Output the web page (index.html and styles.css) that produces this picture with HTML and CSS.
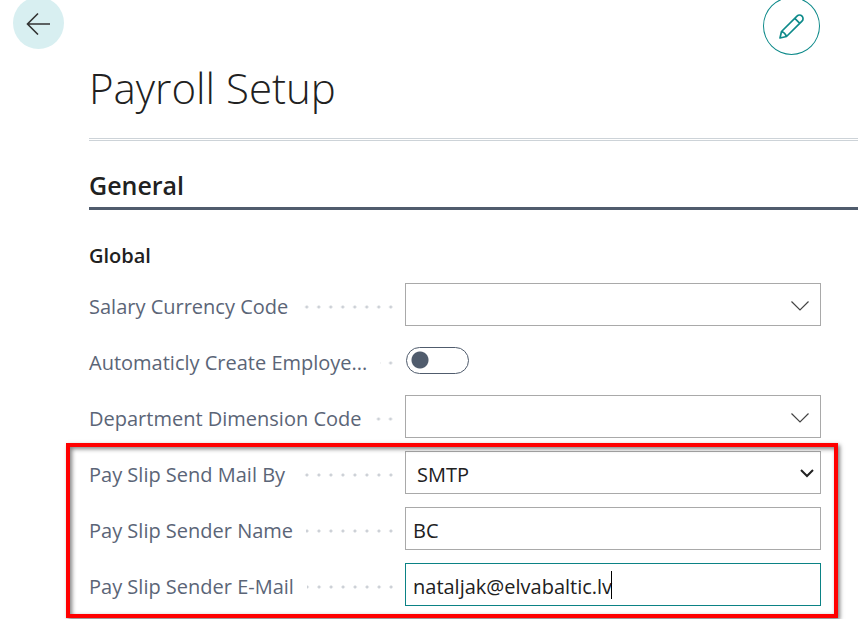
FILE: index.html
```html
<!DOCTYPE html>
<html lang="en">
<head>
<meta charset="utf-8">
<title>Payroll Setup</title>
<link rel="stylesheet" href="styles.css">
</head>
<body>
<header class="topbar">
  <button class="back" type="button" aria-label="Back">
    <svg width="26" height="24" viewBox="0 0 26 24"><path d="M24 13H1.500M12 2.500L1.500 13 12 23.500" fill="none" stroke="#333" stroke-width="1.600"/></svg>
  </button>
  <button class="edit" type="button" aria-label="Edit">
    <svg width="26" height="26" viewBox="0 0 26 26"><g fill="none" stroke="#0e8a8a" stroke-width="1.700" stroke-linejoin="round"><path d="M1 25l1.500-6.500L18 3.200a3.500 3.500 0 0 1 5 5L7.500 23.500zM15.800 5.400l5 5M2.500 18.500q3.500 1 5 5"/></g></svg>
  </button>
</header>
<main class="page">
  <h1 class="title">Payroll Setup</h1>
  <h2 class="section">General</h2>
  <h3 class="group">Global</h3>
  <form class="fields">
    <div class="row">
      <div class="caption"><label for="currency">Salary Currency Code</label><span class="dots"></span></div>
      <div class="field">
        <input class="box" id="currency" type="text">
        <svg class="chevron" width="18" height="10" viewBox="0 0 18 10"><path d="M.5.5L9 9 17.500.5" fill="none" stroke="#444" stroke-width="1.200"/></svg>
      </div>
    </div>
    <div class="row">
      <div class="caption"><label for="auto">Automaticly Create Employe...</label><span class="dots"></span></div>
      <div class="field"><input class="toggle" id="auto" type="checkbox"></div>
    </div>
    <div class="row">
      <div class="caption"><label for="department">Department Dimension Code</label><span class="dots"></span></div>
      <div class="field">
        <input class="box" id="department" type="text">
        <svg class="chevron" width="18" height="10" viewBox="0 0 18 10"><path d="M.5.5L9 9 17.500.5" fill="none" stroke="#444" stroke-width="1.200"/></svg>
      </div>
    </div>
    <div class="marked">
      <div class="row">
        <div class="caption"><label for="sendby">Pay Slip Send Mail By</label><span class="dots"></span></div>
        <div class="field">
          <select class="box select" id="sendby"><option>SMTP</option></select>
          <svg class="chevron chevron-select" width="14" height="9" viewBox="0 0 14 9"><path d="M1 1l6 6 6-6" fill="none" stroke="#222" stroke-width="2"/></svg>
        </div>
      </div>
      <div class="row">
        <div class="caption"><label for="sender">Pay Slip Sender Name</label><span class="dots"></span></div>
        <div class="field"><input class="box" id="sender" type="text" value="BC"></div>
      </div>
      <div class="row">
        <div class="caption"><label for="email">Pay Slip Sender E-Mail</label><span class="dots"></span></div>
        <div class="field"><input class="box active" id="email" type="text" value="nataljak@elvabaltic.lv"><span class="caret"></span></div>
      </div>
    </div>
  </form>
</main>
</body>
</html>
```
FILE: styles.css
```css
* { box-sizing: border-box; }
body {
  margin: 0;
  overflow: hidden;
  background: #fff;
  color: #212121;
  font-family: "Segoe UI", "Open Sans", "Noto Sans", sans-serif;
  font-size: 20px;
}
.topbar {
  display: flex;
  justify-content: space-between;
  margin-top: -3px;
  padding: 0 38px 0 13px;
}
button {
  display: flex;
  align-items: center;
  justify-content: center;
  padding: 0;
  border: 0;
  border-radius: 50%;
}
.back { width: 51px; height: 52px; background: #d8eff1; }
.edit { width: 57px; height: 58px; background: #fff; border: 1px solid #0e8a8a; }
.page { padding-left: 89px; }
.title {
  margin: 0;
  height: 86px;
  border-bottom: 3px double #cdd3d8;
  line-height: 66px;
  font-size: 42px;
  font-weight: 300;
}
.section {
  margin: 24px 0 0;
  padding-bottom: 2px;
  border-bottom: 3px solid #505c6d;
  line-height: 40px;
  font-size: 25px;
  font-weight: 600;
}
.group {
  margin: 30px 0 11px;
  line-height: 32px;
  font-size: 20px;
  font-weight: 600;
}
.row {
  display: grid;
  grid-template-columns: 304px 1fr;
  column-gap: 12px;
  height: 56px;
  padding-right: 37px;
}
.caption {
  display: flex;
  height: 46px;
  align-items: center;
  color: #5b6577;
  white-space: nowrap;
}
.dots {
  flex: 1;
  height: 6px;
  margin-left: 13px;
  background: radial-gradient(circle at 10px 4px, #ccd0d6 1px, transparent 2px) right / 12px 6px repeat-x;
}
.field { position: relative; height: 43px; }
.box {
  width: 100%;
  height: 100%;
  padding: 3px 7px 0;
  border: 1px solid #a9a9a9;
  border-radius: 0;
  background: #fff;
  color: #212121;
  font: inherit;
  outline: 0;
}
.select { appearance: none; padding-left: 11px; }
.active { border-color: #0b8285; }
.chevron { position: absolute; top: 18px; right: 12px; pointer-events: none; }
.chevron-select { right: 7px; }
.toggle {
  appearance: none;
  display: block;
  width: 63px;
  height: 27px;
  margin: 8px 1px;
  border: 1px solid #505c6d;
  border-radius: 14px;
  background: radial-gradient(circle at 13px 12px, #505c6d 8px, transparent 9px);
}
.caret { position: absolute; top: 8px; left: 206px; width: 1px; height: 28px; background: #000; }
.marked { position: relative; }
.marked::after {
  content: "";
  position: absolute;
  inset: -8px 20px 1px -23px;
  border: 4px solid #f00;
  box-shadow: 2px 2px 4px rgba(0, 0, 0, .5), inset 2px 2px 4px rgba(0, 0, 0, .5);
  pointer-events: none;
}
```
